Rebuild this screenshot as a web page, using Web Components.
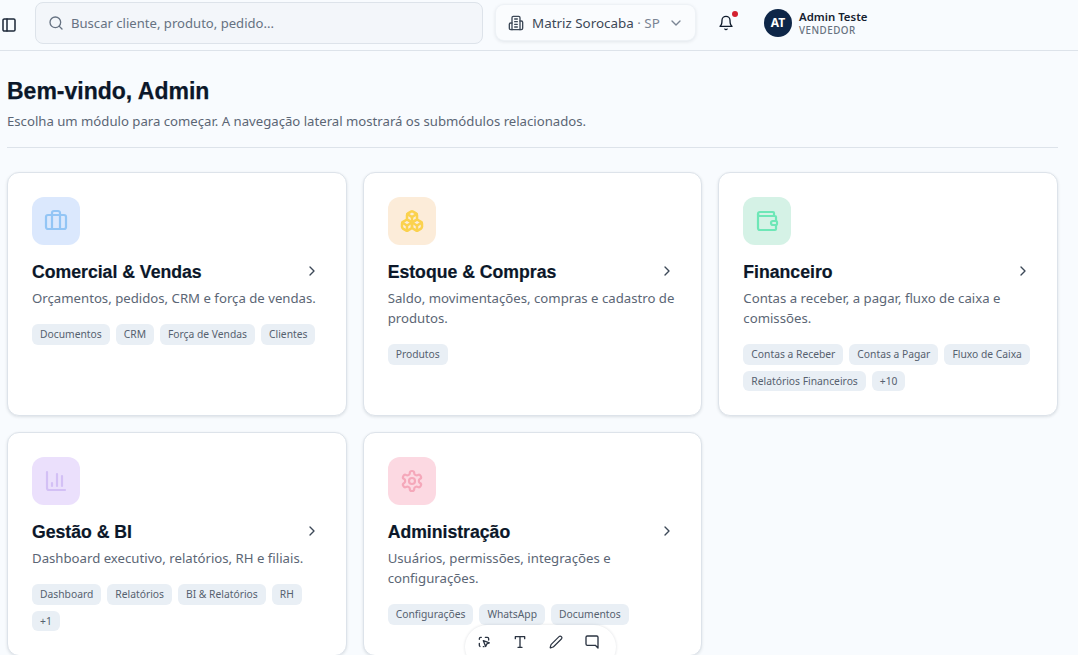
<!DOCTYPE html>
<html lang="pt-BR">
<head>
<meta charset="utf-8">
<title>Início</title>
<style>
  html, body { margin: 0; height: 100%; overflow: hidden; }
  body { background: #f8fbfe; color: #0b1729; font-family: "Noto Sans", sans-serif; }
</style>
</head>
<body>
<app-shell>
  <top-bar></top-bar>
  <page-head title="Bem-vindo, Admin" text="Escolha um módulo para começar. A navegação lateral mostrará os submódulos relacionados."></page-head>
  <module-grid>
    <module-card heading="Comercial &amp; Vendas" icon="briefcase" bg="#dbe8fd" fg="#93c5f5"
      text="Orçamentos, pedidos, CRM e força de vendas.">
      <tag-chip>Documentos</tag-chip><tag-chip>CRM</tag-chip><tag-chip>Força de Vendas</tag-chip><tag-chip>Clientes</tag-chip>
    </module-card>
    <module-card heading="Estoque &amp; Compras" icon="boxes" bg="#fcecd9" fg="#fbd24e"
      text="Saldo, movimentações, compras e cadastro de produtos.">
      <tag-chip>Produtos</tag-chip>
    </module-card>
    <module-card heading="Financeiro" icon="wallet" bg="#d5f2e6" fg="#6ee7b7"
      text="Contas a receber, a pagar, fluxo de caixa e comissões.">
      <tag-chip>Contas a Receber</tag-chip><tag-chip>Contas a Pagar</tag-chip><tag-chip>Fluxo de Caixa</tag-chip><tag-chip>Relatórios Financeiros</tag-chip><tag-chip>+10</tag-chip>
    </module-card>
    <module-card heading="Gestão &amp; BI" icon="chart" bg="#ebe0fc" fg="#d3c0f5"
      text="Dashboard executivo, relatórios, RH e filiais.">
      <tag-chip>Dashboard</tag-chip><tag-chip>Relatórios</tag-chip><tag-chip>BI &amp; Relatórios</tag-chip><tag-chip>RH</tag-chip><tag-chip>+1</tag-chip>
    </module-card>
    <module-card heading="Administração" icon="settings" bg="#fcd9e2" fg="#f5a8ba"
      text="Usuários, permissões, integrações e configurações.">
      <tag-chip>Configurações</tag-chip><tag-chip>WhatsApp</tag-chip><tag-chip>Documentos</tag-chip>
    </module-card>
  </module-grid>
  <float-tools></float-tools>
</app-shell>

<script>
const ICONS = {
  panel: '<rect x="3" y="3" width="18" height="18" rx="2"/><path d="M9 3v18"/>',
  search: '<circle cx="11" cy="11" r="8"/><path d="m21 21-4.3-4.3"/>',
  building: '<path d="M6 22V4a2 2 0 0 1 2-2h8a2 2 0 0 1 2 2v18Z"/><path d="M6 12H4a2 2 0 0 0-2 2v6a2 2 0 0 0 2 2h2"/><path d="M18 9h2a2 2 0 0 1 2 2v9a2 2 0 0 1-2 2h-2"/><path d="M10 6h4"/><path d="M10 10h4"/><path d="M10 14h4"/><path d="M10 18h4"/>',
  down: '<path d="m6 9 6 6 6-6"/>',
  right: '<path d="m9 18 6-6-6-6"/>',
  bell: '<path d="M6 8a6 6 0 0 1 12 0c0 7 3 9 3 9H3s3-2 3-9"/><path d="M10.3 21a1.94 1.94 0 0 0 3.4 0"/>',
  briefcase: '<path d="M16 20V4a2 2 0 0 0-2-2h-4a2 2 0 0 0-2 2v16"/><rect x="2" y="6" width="20" height="14" rx="2"/>',
  boxes: '<path d="M2.97 12.92A2 2 0 0 0 2 14.63v3.24a2 2 0 0 0 .97 1.71l3 1.8a2 2 0 0 0 2.06 0L12 19v-5.5l-5-3-4.03 2.42Z"/><path d="m7 16.5-4.74-2.85"/><path d="m7 16.5 5-3"/><path d="M7 16.5v5.17"/><path d="M12 13.5V19l3.97 2.38a2 2 0 0 0 2.06 0l3-1.8a2 2 0 0 0 .97-1.71v-3.24a2 2 0 0 0-.97-1.71L17 10.5l-5 3Z"/><path d="m17 16.5-5-3"/><path d="m17 16.5 4.74-2.85"/><path d="M17 16.5v5.17"/><path d="M7.97 4.42A2 2 0 0 0 7 6.13v4.37l5 3 5-3V6.13a2 2 0 0 0-.97-1.71l-3-1.8a2 2 0 0 0-2.06 0l-3 1.8Z"/><path d="M12 8 7.26 5.15"/><path d="m12 8 4.74-2.85"/><path d="M12 13.5V8"/>',
  wallet: '<path d="M19 7V4a1 1 0 0 0-1-1H5a2 2 0 0 0 0 4h15a1 1 0 0 1 1 1v4h-3a2 2 0 0 0 0 4h3a1 1 0 0 0 1-1v-2a1 1 0 0 0-1-1"/><path d="M3 5v14a2 2 0 0 0 2 2h15a1 1 0 0 0 1-1v-4"/>',
  chart: '<path d="M3 3v16a2 2 0 0 0 2 2h16"/><path d="M18 17V7"/><path d="M13 17V5"/><path d="M8 17v-3"/>',
  settings: '<path d="M12.22 2h-.44a2 2 0 0 0-2 2v.18a2 2 0 0 1-1 1.73l-.43.25a2 2 0 0 1-2 0l-.15-.08a2 2 0 0 0-2.73.73l-.22.38a2 2 0 0 0 .73 2.73l.15.1a2 2 0 0 1 1 1.72v.51a2 2 0 0 1-1 1.74l-.15.09a2 2 0 0 0-.73 2.73l.22.38a2 2 0 0 0 2.73.73l.15-.08a2 2 0 0 1 2 0l.43.25a2 2 0 0 1 1 1.73V20a2 2 0 0 0 2 2h.44a2 2 0 0 0 2-2v-.18a2 2 0 0 1 1-1.73l.43-.25a2 2 0 0 1 2 0l.15.08a2 2 0 0 0 2.73-.73l.22-.39a2 2 0 0 0-.73-2.73l-.15-.08a2 2 0 0 1-1-1.74v-.5a2 2 0 0 1 1-1.74l.15-.09a2 2 0 0 0 .73-2.73l-.22-.38a2 2 0 0 0-2.73-.73l-.15.08a2 2 0 0 1-2 0l-.43-.25a2 2 0 0 1-1-1.73V4a2 2 0 0 0-2-2z"/><circle cx="12" cy="12" r="3"/>',
  select: '<path d="M5 8V7a2 2 0 0 1 2-2h1"/><path d="M14 5h3a2 2 0 0 1 2 2v2"/><path d="M5 14v3a2 2 0 0 0 1 1.7"/><path d="M11 19h1"/><path d="m11 10 9 3.2-3.8 1.7-1.7 3.8z"/>',
  text: '<path d="M5 7V4h14v3"/><path d="M12 4v16"/><path d="M9 20h6"/>',
  pencil: '<path d="M21.174 6.812a1 1 0 0 0-3.986-3.987L3.842 16.174a2 2 0 0 0-.5.83l-1.321 4.352a.5.5 0 0 0 .623.622l4.353-1.32a2 2 0 0 0 .83-.497z"/>',
  comment: '<path d="M3 15a2 2 0 0 0 2 2h12l4 4V5a2 2 0 0 0-2-2H5a2 2 0 0 0-2 2z"/>'
};

class UiIcon extends HTMLElement {
  connectedCallback() {
    const size = this.getAttribute('size') || 16;
    const stroke = this.getAttribute('stroke') || 2;
    const shadow = this.attachShadow({ mode: 'open' });
    shadow.innerHTML = `
      <style>:host { display: inline-flex; flex: none; } svg { display: block; }</style>
      <svg width="${size}" height="${size}" viewBox="0 0 24 24" fill="none" stroke="currentColor"
        stroke-width="${stroke}" stroke-linecap="round" stroke-linejoin="round">${ICONS[this.getAttribute('name')]}</svg>`;
  }
}
customElements.define('ui-icon', UiIcon);

class AppShell extends HTMLElement {
  constructor() {
    super();
    this.attachShadow({ mode: 'open' }).innerHTML = `
      <style>
        :host { display: block; position: relative; height: 655px; overflow: hidden; }
      </style>
      <slot></slot>`;
  }
}
customElements.define('app-shell', AppShell);

class TopBar extends HTMLElement {
  constructor() {
    super();
    this.attachShadow({ mode: 'open' }).innerHTML = `
      <style>
        :host {
          display: flex; align-items: center; height: 50px; box-sizing: content-box;
          border-bottom: 1px solid #dde3ea; padding-left: 1px; color: #0b1729;
        }
        .toggle { width: 16px; height: 16px; margin-right: 18px; color: #1e2a3a; }
        .search {
          display: flex; align-items: center; gap: 7px; box-sizing: border-box;
          width: 448px; height: 42px; margin-top: -5px; padding-left: 12px;
          background: #f3f6fa; border: 1px solid #dde3ea; border-radius: 8px;
          color: #667282; font-size: 13.1px;
        }
        .branch {
          display: flex; align-items: center; box-sizing: border-box;
          width: 199px; height: 35px; margin: -5px 0 0 13px; padding-left: 12px;
          background: #fafcfe; border-radius: 8px; color: #3c4857; font-size: 13.4px;
          box-shadow: 0 0 0 1px #eef2f6, 0 1px 4px rgba(15, 30, 50, .14);
        }
        .branch b { font-weight: 400; margin-left: 8px; white-space: nowrap; }
        .branch span { color: #7a8594; }
        .branch .chev { margin-left: 8px; color: #7a8594; }
        .bell { position: relative; display: flex; margin: -5px 0 0 23px; color: #0f1b2c; }
        .dot {
          position: absolute; top: -4px; right: -4px; width: 6px; height: 6px;
          border-radius: 50%; background: #d3202f;
        }
        .user { display: flex; align-items: center; gap: 7px; margin: -3px 0 0 30px; }
        .avatar {
          display: flex; align-items: center; justify-content: center; margin-top: -2px;
          width: 28px; height: 28px; border-radius: 50%;
          background: #0e2648; color: #fff; font: 700 12px "Noto Sans", sans-serif;
        }
        .name { font-size: 11.4px; font-weight: 600; line-height: 14px; color: #15212f; }
        .role { font-size: 9.8px; font-weight: 500; line-height: 13px; letter-spacing: .5px; color: #67727f; }
      </style>
      <ui-icon class="toggle" name="panel" size="16" stroke="2.3"></ui-icon>
      <div class="search"><ui-icon name="search" size="16"></ui-icon>Buscar cliente, produto, pedido...</div>
      <div class="branch">
        <ui-icon name="building" size="16"></ui-icon>
        <b>Matriz Sorocaba <span>· SP</span></b>
        <ui-icon class="chev" name="down" size="16"></ui-icon>
      </div>
      <div class="bell"><ui-icon name="bell" size="16"></ui-icon><i class="dot"></i></div>
      <div class="user">
        <div class="avatar">AT</div>
        <div><div class="name">Admin Teste</div><div class="role">VENDEDOR</div></div>
      </div>`;
  }
}
customElements.define('top-bar', TopBar);

class PageHead extends HTMLElement {
  connectedCallback() {
    this.attachShadow({ mode: 'open' }).innerHTML = `
      <style>
        :host {
          display: block; margin: 0 20px 24px 7px; padding: 24px 0 16px;
          border-bottom: 1px solid #dde3ea;
        }
        h1 { margin: 0 0 4px; font: 700 23px/32px "Liberation Sans", Arial, sans-serif; color: #0b1729; -webkit-text-stroke: .25px #0b1729; }
        p { margin: 0; font-size: 13.17px; line-height: 20px; color: #5b6675; }
      </style>
      <h1>${this.getAttribute('title')}</h1>
      <p>${this.getAttribute('text')}</p>`;
    this.removeAttribute('title');
  }
}
customElements.define('page-head', PageHead);

class ModuleGrid extends HTMLElement {
  constructor() {
    super();
    this.attachShadow({ mode: 'open' }).innerHTML = `
      <style>
        :host {
          display: grid; grid-template-columns: repeat(3, 1fr); gap: 16px;
          margin: 0 20px 0 7px;
        }
      </style>
      <slot></slot>`;
  }
}
customElements.define('module-grid', ModuleGrid);

class ModuleCard extends HTMLElement {
  connectedCallback() {
    const a = n => this.getAttribute(n);
    const esc = s => s.replace(/&/g, '&amp;');
    const stroke = a('icon') === 'boxes' ? 2.5 : 2.2;
    this.attachShadow({ mode: 'open' }).innerHTML = `
      <style>
        :host {
          display: block; box-sizing: border-box; padding: 24px;
          background: #fff; border: 1px solid #dde3ea; border-radius: 12px;
          box-shadow: 0 1px 3px rgba(15, 30, 50, .12);
        }
        .tile {
          display: flex; align-items: center; justify-content: center;
          width: 48px; height: 48px; margin-bottom: 13px; border-radius: 12px;
          background: ${a('bg')}; color: ${a('fg')};
        }
        .row { display: flex; align-items: center; justify-content: space-between; margin-bottom: 2px; }
        h3 { margin: 0; font: 700 17.65px/28px "Liberation Sans", Arial, sans-serif; color: #0b1729; -webkit-text-stroke: .2px #0b1729; }
        .chev { margin: -2px 2px 0 0; color: #3c4857; }
        p { margin: 0 0 16px; font-size: 13.2px; line-height: 20px; color: #5b6675; }
        .tags { display: flex; flex-wrap: wrap; gap: 6px; }
      </style>
      <div class="tile"><ui-icon name="${a('icon')}" size="24" stroke="${stroke}"></ui-icon></div>
      <div class="row"><h3>${esc(a('heading'))}</h3><ui-icon class="chev" name="right" size="16"></ui-icon></div>
      <p>${a('text')}</p>
      <div class="tags"><slot></slot></div>`;
  }
}
customElements.define('module-card', ModuleCard);

class TagChip extends HTMLElement {
  constructor() {
    super();
    this.attachShadow({ mode: 'open' }).innerHTML = `
      <style>
        :host {
          display: inline-flex; align-items: center; height: 20.5px; padding: 0 8px;
          background: #e9eff5; border-radius: 6px;
          font-size: 10.3px; line-height: 20px; color: #56616f;
        }
      </style>
      <slot></slot>`;
  }
}
customElements.define('tag-chip', TagChip);

class FloatTools extends HTMLElement {
  constructor() {
    super();
    this.attachShadow({ mode: 'open' }).innerHTML = `
      <style>
        :host {
          position: absolute; left: 465px; top: 625px; box-sizing: border-box;
          display: flex; align-items: center; gap: 20px; width: 151px; height: 44px;
          padding: 0 0 10px 11px; background: #fff; border-radius: 22px;
          box-shadow: 0 0 3px rgba(15, 30, 50, .14); color: #2b3442;
        }
        .pen { margin: 0 1px; }
      </style>
      <ui-icon name="select" size="16"></ui-icon>
      <ui-icon name="text" size="16"></ui-icon>
      <ui-icon class="pen" name="pencil" size="14"></ui-icon>
      <ui-icon name="comment" size="16"></ui-icon>`;
  }
}
customElements.define('float-tools', FloatTools);
</script>
</body>
</html>
